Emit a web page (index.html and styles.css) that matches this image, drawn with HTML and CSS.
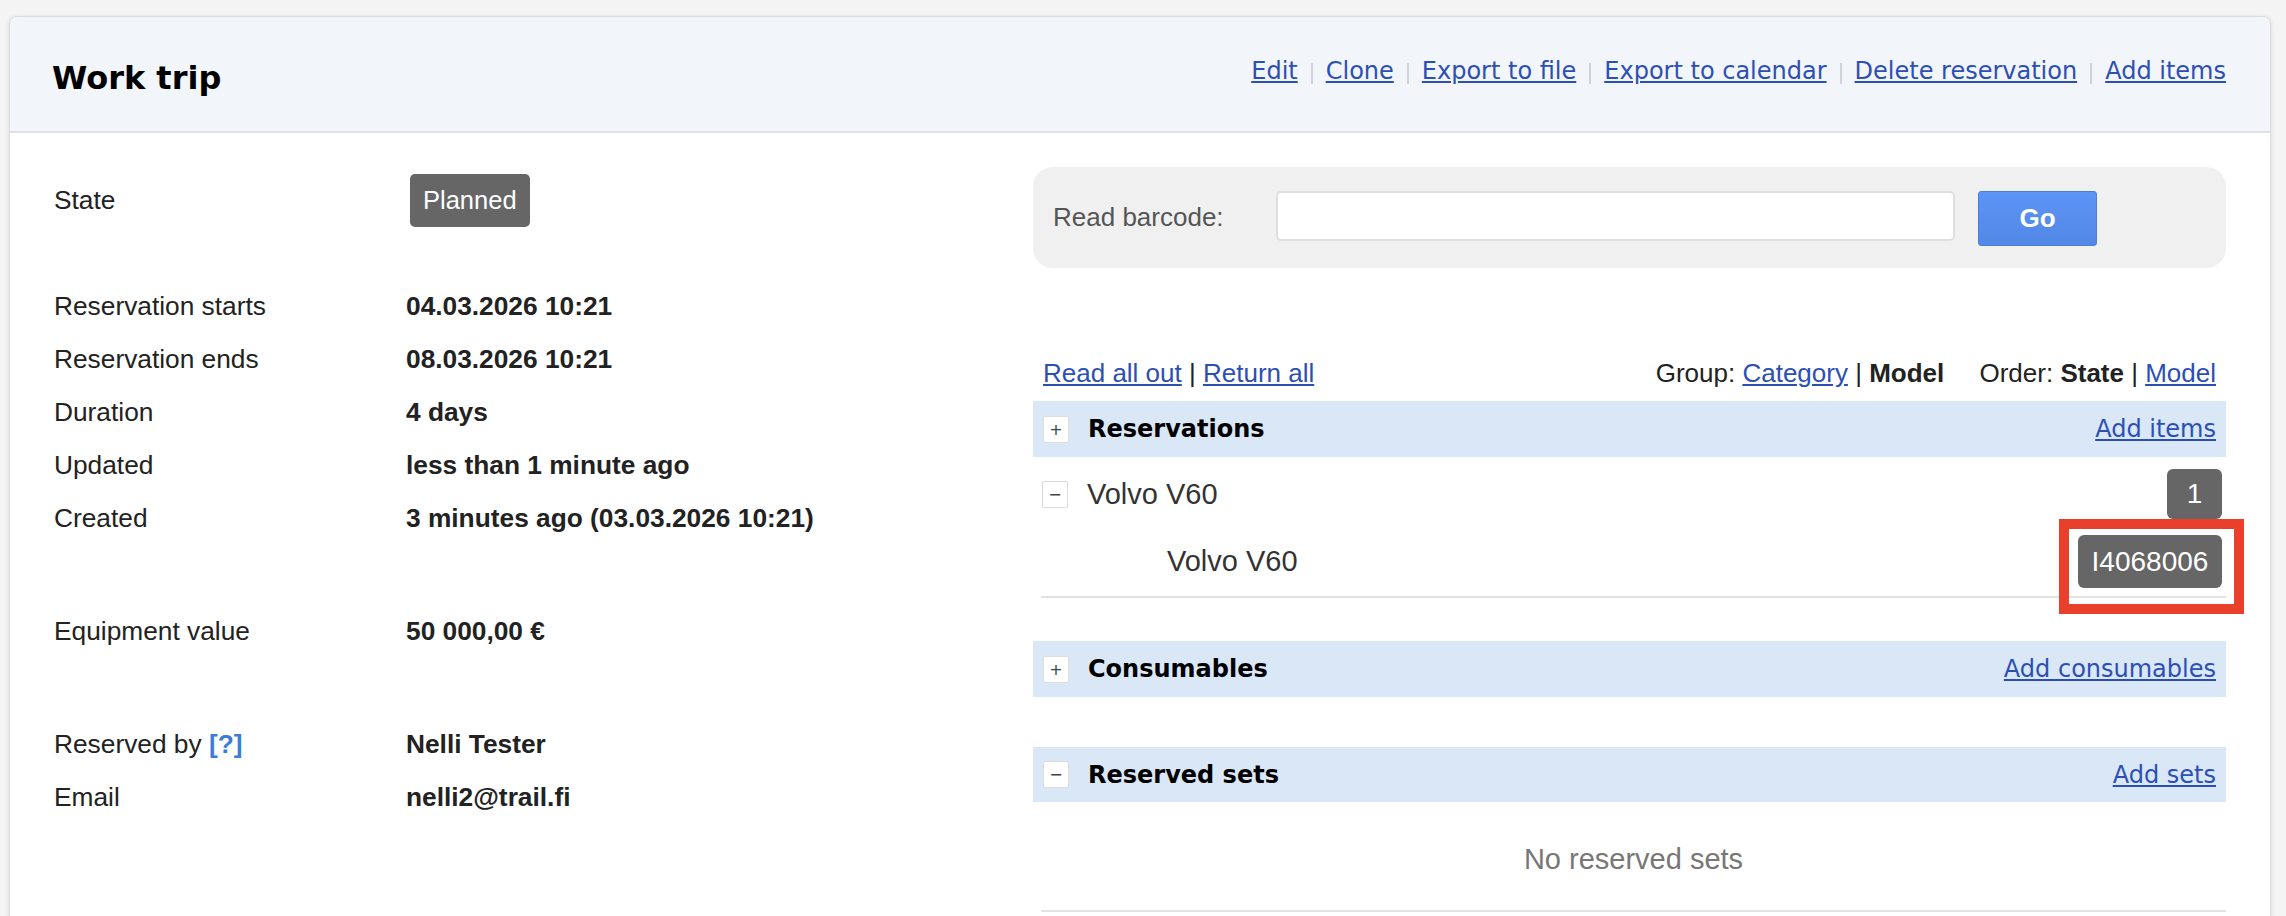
FILE: index.html
```html
<!DOCTYPE html>
<html lang="en">
<head>
<meta charset="utf-8">
<title>Work trip</title>
<link rel="stylesheet" href="styles.css">
</head>
<body>
<div class="card">
  <header class="card-head">
    <h1 class="title">Work trip</h1>
    <nav class="actions">
      <a href="#">Edit</a><span class="sep"></span><a href="#">Clone</a><span class="sep"></span><a href="#">Export to file</a><span class="sep"></span><a href="#">Export to calendar</a><span class="sep"></span><a href="#">Delete reservation</a><span class="sep"></span><a href="#">Add items</a>
    </nav>
  </header>
  <div class="card-body">
    <section class="info">
      <div class="group">
        <div class="row"><span class="label">State</span><span class="value"><span class="state">Planned</span></span></div>
      </div>
      <div class="group group-first">
        <div class="row"><span class="label">Reservation starts</span><span class="value">04.03.2026 10:21</span></div>
        <div class="row"><span class="label">Reservation ends</span><span class="value">08.03.2026 10:21</span></div>
        <div class="row"><span class="label">Duration</span><span class="value">4 days</span></div>
        <div class="row"><span class="label">Updated</span><span class="value">less than 1 minute ago</span></div>
        <div class="row"><span class="label">Created</span><span class="value">3 minutes ago (03.03.2026 10:21)</span></div>
      </div>
      <div class="group group-next">
        <div class="row"><span class="label">Equipment value</span><span class="value">50 000,00 €</span></div>
      </div>
      <div class="group group-next">
        <div class="row"><span class="label">Reserved by <a class="help" href="#">[?]</a></span><span class="value">Nelli Tester</span></div>
        <div class="row"><span class="label">Email</span><span class="value">nelli2@trail.fi</span></div>
      </div>
    </section>
    <section class="items">
      <form class="barcode">
        <label class="barcode-label">Read barcode:</label>
        <input class="barcode-input" type="text">
        <button class="go" type="button">Go</button>
      </form>
      <div class="tools">
        <div class="tools-left"><a href="#">Read all out</a> | <a href="#">Return all</a></div>
        <div class="tools-right">
          <span>Group: <a href="#">Category</a> | <b>Model</b></span>
          <span class="order">Order: <b>State</b> | <a href="#">Model</a></span>
        </div>
      </div>
      <div class="bar">
        <span class="toggle">+</span><span class="bar-title">Reservations</span><a class="bar-link" href="#">Add items</a>
      </div>
      <div class="list">
        <div class="model-row">
          <span class="toggle">−</span><span class="model-name">Volvo V60</span><span class="badge badge-count">1</span>
        </div>
        <div class="item-row">
          <span class="item-name">Volvo V60</span>
          <span class="badge badge-code">I4068006<span class="highlight"></span></span>
        </div>
      </div>
      <div class="bar bar-consumables">
        <span class="toggle">+</span><span class="bar-title">Consumables</span><a class="bar-link" href="#">Add consumables</a>
      </div>
      <div class="bar bar-sets">
        <span class="toggle">−</span><span class="bar-title">Reserved sets</span><a class="bar-link" href="#">Add sets</a>
      </div>
      <div class="empty">No reserved sets</div>
    </section>
  </div>
</div>
</body>
</html>
```
FILE: styles.css
```css
html, body {
  margin: 0;
  padding: 0;
}
body {
  background: #f4f4f4;
  font-family: "Liberation Sans", Arial, Helvetica, sans-serif;
  color: #222;
  padding: 16px 15px 0 9px;
  overflow: hidden;
  height: 916px;
  box-sizing: border-box;
}
a {
  color: #2c4fb6;
}
.card {
  background: #fff;
  border: 1px solid #dcdcdc;
  border-radius: 8px;
  box-shadow: 0 1px 4px rgba(0,0,0,0.12);
  height: 940px;
  overflow: hidden;
}
.card-head {
  height: 114px;
  background: #f2f5fa;
  border-bottom: 2px solid #dde1e8;
  display: flex;
  align-items: center;
  justify-content: space-between;
  padding: 0 44px 0 42px;
}
.title {
  margin: 8px 0 0 0;
  font-family: "DejaVu Sans", Verdana, sans-serif;
  font-weight: bold;
  font-size: 32px;
  color: #000;
}
.actions {
  display: flex;
  align-items: center;
  font-family: "DejaVu Sans", Verdana, sans-serif;
  font-size: 24px;
  margin-bottom: 6px;
}
.actions a {
  color: #2c4fb6;
}
.sep {
  display: inline-block;
  width: 2px;
  height: 21px;
  background: #cfd2d6;
  margin: 4px 13px 0 13px;
}
.card-body {
  display: flex;
  padding: 34px 44px 0 44px;
}
.info {
  flex: 1;
  padding-top: 7px;
  font-size: 26.3px;
}
.row {
  display: flex;
  height: 53px;
  line-height: 53px;
}
.label {
  width: 352px;
  color: #222;
}
.value {
  font-weight: bold;
  color: #222;
}
.group-first {
  margin-top: 53px;
}
.group-next {
  margin-top: 60px;
}
.state {
  display: inline-block;
  background: #666;
  color: #fff;
  font-weight: normal;
  font-size: 25.5px;
  height: 53px;
  line-height: 53px;
  padding: 0 13px;
  margin-left: 4px;
  border-radius: 5px;
  box-sizing: border-box;
}
.help {
  color: #3b7ddd;
  text-decoration: none;
  font-weight: bold;
}
.items {
  width: 1193px;
  flex: none;
}
.barcode {
  margin: 0;
  height: 101px;
  background: #f0f0f0;
  border-radius: 20px;
  display: flex;
  align-items: center;
  padding: 0 20px;
}
.barcode-label {
  width: 223px;
  font-size: 26px;
  color: #555;
}
.barcode-input {
  width: 679px;
  height: 50px;
  box-sizing: border-box;
  border: 2px solid #dedede;
  border-radius: 5px;
  background: #fff;
  margin: 0 0 3px 0;
  padding: 0 10px;
}
.go {
  margin-left: 23px;
  width: 119px;
  height: 55px;
  border: 1px solid #4a7fe0;
  border-radius: 3px;
  background: linear-gradient(#5c94f6, #5288e6);
  color: #fff;
  font-family: "Liberation Sans", Arial, sans-serif;
  font-weight: bold;
  font-size: 26px;
  margin-top: 2px;
}
.tools {
  margin-top: 90px;
  display: flex;
  justify-content: space-between;
  font-size: 26px;
  line-height: 30px;
  padding: 0 10px;
}
.order {
  margin-left: 28px;
}
.bar {
  margin-top: 13px;
  height: 56px;
  background: #d9e7f7;
  display: flex;
  align-items: center;
  padding: 0 10px;
}
.bar-consumables {
  margin-top: 43px;
}
.bar-sets {
  margin-top: 50px;
  height: 55px;
}
.toggle {
  width: 26px;
  height: 27px;
  box-sizing: border-box;
  border: 1px solid #dcdcdc;
  background: #fff;
  border-radius: 2px;
  display: flex;
  align-items: center;
  justify-content: center;
  font-family: "DejaVu Sans", sans-serif;
  font-size: 16px;
  color: #444;
  margin-right: 19px;
  flex: none;
}
.bar-title {
  flex: 1;
  font-family: "DejaVu Sans", Verdana, sans-serif;
  font-weight: bold;
  font-size: 24px;
  color: #000;
}
.bar-link {
  font-family: "DejaVu Sans", Verdana, sans-serif;
  font-size: 24px;
}
.list {
  margin-left: 8px;
  padding: 12px 4px 8px 1px;
  border-bottom: 2px solid #e2e2e2;
}
.model-row {
  display: flex;
  align-items: center;
  height: 50px;
}
.model-name {
  flex: 1;
  font-size: 29px;
  color: #333;
}
.item-row {
  display: flex;
  align-items: center;
  height: 53px;
  margin-top: 16px;
  padding-left: 125px;
}
.item-name {
  flex: 1;
  font-size: 29px;
  color: #333;
}
.badge {
  background: #666;
  color: #fff;
  font-size: 28px;
  border-radius: 6px;
  display: flex;
  align-items: center;
  justify-content: center;
  box-sizing: border-box;
}
.badge-count {
  width: 55px;
  height: 50px;
}
.badge-code {
  width: 144px;
  height: 53px;
  position: relative;
}
.highlight {
  position: absolute;
  left: -19px;
  top: -16px;
  width: 185px;
  height: 95px;
  box-sizing: border-box;
  border: 10px solid #e8402a;
}
.empty {
  margin-left: 8px;
  padding: 41px 0 34px 0;
  line-height: 33px;
  text-align: center;
  font-size: 29px;
  color: #777;
  border-bottom: 2px solid #e2e2e2;
}
```
